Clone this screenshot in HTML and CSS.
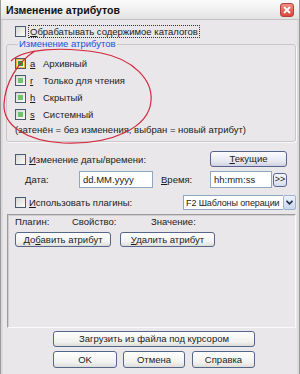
FILE: index.html
```html
<!DOCTYPE html>
<html lang="ru">
<head>
    <meta charset="UTF-8">
    <title>Изменение атрибутов</title>
    <link rel="stylesheet" href="styles.css">
</head>
<body>
    <div class="window">
        <div class="titlebar">
            <span class="title">Изменение атрибутов</span>
            <span class="close">
                <svg width="8" height="8" viewBox="0 0 8 8"><path d="M1 1 L7 7 M7 1 L1 7" stroke="#fff" stroke-width="1.8"/></svg>
            </span>
        </div>

        <div class="content">
            <div class="row row-first">
                <span class="check"></span>
                <span class="focus"><u>О</u>брабатывать содержимое каталогов</span>
            </div>

            <fieldset class="group">
                <legend class="group-title">Изменение атрибутов</legend>
                <div class="attr"><span class="check tri tri-hot"></span><u class="key">a</u><span>Архивный</span></div>
                <div class="attr"><span class="check tri"></span><u class="key">r</u><span>Только для чтения</span></div>
                <div class="attr"><span class="check tri"></span><u class="key">h</u><span>Скрытый</span></div>
                <div class="attr"><span class="check tri"></span><u class="key">s</u><span>Системный</span></div>
                <div class="note">(затенён = без изменения, выбран = новый атрибут)</div>
            </fieldset>

            <div class="row row-date">
                <span class="check"></span>
                <span><u>И</u>зменение даты/времени:</span>
                <button class="btn btn-now"><u>Т</u>екущие</button>
            </div>

            <div class="row row-inputs">
                <span class="lbl lbl-date"><u>Д</u>ата:</span>
                <span class="field field-date">dd.MM.yyyy</span>
                <span class="lbl lbl-time"><u>В</u>ремя:</span>
                <span class="field field-time">hh:mm:ss</span>
                <button class="btn btn-more">&gt;&gt;</button>
            </div>

            <div class="row row-plugins">
                <span class="check"></span>
                <span><u>И</u>спользовать плагины:</span>
                <span class="select">
                    <span class="select-text">F2 Шаблоны операции</span>
                    <span class="select-arrow">
                        <svg width="7" height="5" viewBox="0 0 7 5"><path d="M0.5 0.8 L3.5 3.8 L6.5 0.8" fill="none" stroke="#1d2c4c" stroke-width="1.6"/></svg>
                    </span>
                </span>
            </div>

            <div class="panel">
                <div class="panel-head">
                    <span class="col col-plugin">Плагин:</span>
                    <span class="col col-prop">Свойство:</span>
                    <span class="col">Значение:</span>
                </div>
                <div class="panel-buttons">
                    <button class="btn btn-add">До<u>б</u>авить атрибут</button>
                    <button class="btn btn-del"><u>У</u>далить атрибут</button>
                </div>
            </div>

            <div class="bottom">
                <button class="btn btn-load">Загрузить из файла под курсором</button>
                <div class="bottom-row">
                    <button class="btn btn-ok">OK</button>
                    <button class="btn btn-cancel">Отмена</button>
                    <button class="btn btn-help">Справка</button>
                </div>
            </div>
        </div>

        <svg class="scribble" width="300" height="374" viewBox="0 0 300 374">
            <path d="M10 61 C22 49, 60 46, 100 53 C132 59, 152 80, 150 101 C148 127, 112 145, 62 143 C26 141, 2 126, 3 104 C4 84, 16 62, 34 51" fill="none" stroke="#d2283c" stroke-width="1.2"/>
        </svg>
    </div>
</body>
</html>
```

FILE: styles.css
```css
body {
    margin: 0;
    padding: 0;
    font-family: "Liberation Sans", Arial, sans-serif;
    font-size: 9.5px;
    color: #1a1a1a;
    background-color: #e9e7e9;
}

.window {
    position: relative;
    width: 300px;
    height: 374px;
    box-sizing: border-box;
    background-color: #e9e7e9;
    border-left: 1px solid #9a9a9a;
    border-right: 1px solid #9a9a9a;
    overflow: hidden;
}

.titlebar {
    height: 20px;
    display: flex;
    align-items: center;
    justify-content: space-between;
    padding: 1px 5px 0 5px;
    box-sizing: border-box;
    background: linear-gradient(#fbfbfb, #eeeeee 60%, #e2e2e2);
    border-bottom: 1px solid #c4c4c4;
}

.title {
    font-size: 10.5px;
    font-weight: bold;
    color: #111;
}

.close {
    width: 14px;
    height: 14px;
    box-sizing: border-box;
    border: 1px solid #b04040;
    border-radius: 3px;
    background: linear-gradient(#ef8f80, #d9473c);
    display: flex;
    align-items: center;
    justify-content: center;
}

.content {
    display: flex;
    flex-direction: column;
    padding: 0 1px 0 2px;
    border-left: 2px solid #dcdadc;
    border-right: 2px solid #dcdadc;
    height: 354px;
}

.row {
    display: flex;
    align-items: center;
}

.check {
    width: 11px;
    height: 11px;
    box-sizing: border-box;
    border: 1px solid #4b5a73;
    background: linear-gradient(135deg, #d8d8d2, #fbfbfb);
    margin-right: 3px;
    flex-shrink: 0;
    position: relative;
}

.tri::after {
    content: "";
    position: absolute;
    left: 2px;
    top: 2px;
    width: 5px;
    height: 5px;
    background-color: #6cc46c;
}

.tri-hot {
    box-shadow: inset 0 0 0 1px #f2b544;
}

.tri-hot::after {
    background-color: #2f9a2f;
}

.row-first {
    height: 13px;
    margin-top: 5px;
    padding-left: 10px;
}

.focus {
    outline: 1px dotted #333;
    padding: 0 1px;
    line-height: 11px;
}

.group {
    margin: 0 0 0 1px;
    padding: 5px 8px 4px 8px;
    border: 1px solid #c9c7c9;
    border-radius: 3px;
    box-shadow: 1px 1px 0 #f8f8f8;
    min-width: 0;
}

.group-title {
    color: #1c4fd6;
    padding: 0 1px;
    margin-left: 3px;
    line-height: 12px;
}

.attr {
    display: flex;
    align-items: center;
    height: 17px;
}

.key {
    width: 13px;
    margin-left: 1px;
}

.note {
    height: 14px;
    line-height: 14px;
}

.row-date {
    height: 18px;
    margin-top: 8px;
    padding-left: 10px;
}

.btn {
    font-family: inherit;
    font-size: 9.5px;
    color: #1a1a1a;
    box-sizing: border-box;
    border: 1px solid #56668a;
    border-radius: 3px;
    background: linear-gradient(#ffffff, #f1f1ef 70%, #dcdcd8);
    padding: 0;
    margin: 0;
    line-height: 1;
}

.btn-now {
    margin-left: auto;
    margin-right: 9px;
    width: 77px;
    height: 16px;
    background: linear-gradient(#fbfbff, #e6e6f0 70%, #cfd0e2);
}

.row-inputs {
    height: 17px;
    margin-top: 3px;
}

.lbl-date {
    margin-left: 20px;
    width: 54px;
}

.field {
    height: 17px;
    box-sizing: border-box;
    background-color: #fff;
    border: 1px solid #8fa6c3;
    padding-left: 3px;
    display: flex;
    align-items: center;
}

.field-date {
    width: 74px;
}

.lbl-time {
    margin-left: 8px;
    width: 49px;
}

.field-time {
    width: 62px;
}

.btn-more {
    width: 14px;
    height: 14px;
    margin-left: 1px;
    font-size: 9px;
    border-color: #5a6a8e;
    background: linear-gradient(#f6f8ff, #d4dcef);
}

.row-plugins {
    height: 15px;
    margin-top: 7px;
    padding-left: 10px;
}

.select {
    margin-left: auto;
    display: flex;
    height: 15px;
}

.select-text {
    width: 100px;
    box-sizing: border-box;
    background-color: #fff;
    border: 1px solid #8fa6c3;
    border-right: none;
    padding-left: 2px;
    font-size: 9px;
    letter-spacing: -0.1px;
    white-space: nowrap;
    overflow: hidden;
    display: flex;
    align-items: center;
}

.select-arrow {
    width: 13px;
    box-sizing: border-box;
    border: 1px solid #9fb2d0;
    border-radius: 2px;
    background: linear-gradient(#eef2fc, #c9d5ee);
    display: flex;
    align-items: center;
    justify-content: center;
}

.panel {
    height: 114px;
    box-sizing: border-box;
    margin-top: 4px;
    margin-left: 2px;
    border-top: 1px solid #9c9a9c;
    border-left: 1px solid #9c9a9c;
    border-right: 1px solid #fafafa;
    border-bottom: 1px solid #fafafa;
    box-shadow: inset 1px 1px 0 #cfcdcf;
    padding: 1px 0 0 7px;
}

.panel-head {
    display: flex;
    height: 12px;
    line-height: 12px;
}

.col-plugin {
    width: 57px;
}

.col-prop {
    width: 79px;
}

.panel-buttons {
    display: flex;
    margin-top: 4px;
}

.btn-add {
    width: 96px;
    height: 15px;
}

.btn-del {
    width: 95px;
    height: 15px;
    margin-left: 9px;
}

.bottom {
    display: flex;
    flex-direction: column;
    padding-left: 48px;
}

.btn-load {
    width: 202px;
    height: 16px;
    margin-top: 3px;
}

.bottom-row {
    display: flex;
    margin-top: 4px;
}

.btn-ok {
    width: 64px;
    height: 17px;
}

.btn-cancel {
    width: 62px;
    height: 17px;
    margin-left: 6px;
}

.btn-help {
    width: 63px;
    height: 17px;
    margin-left: 7px;
}

.scribble {
    position: absolute;
    left: 0;
    top: 0;
    pointer-events: none;
}
```
